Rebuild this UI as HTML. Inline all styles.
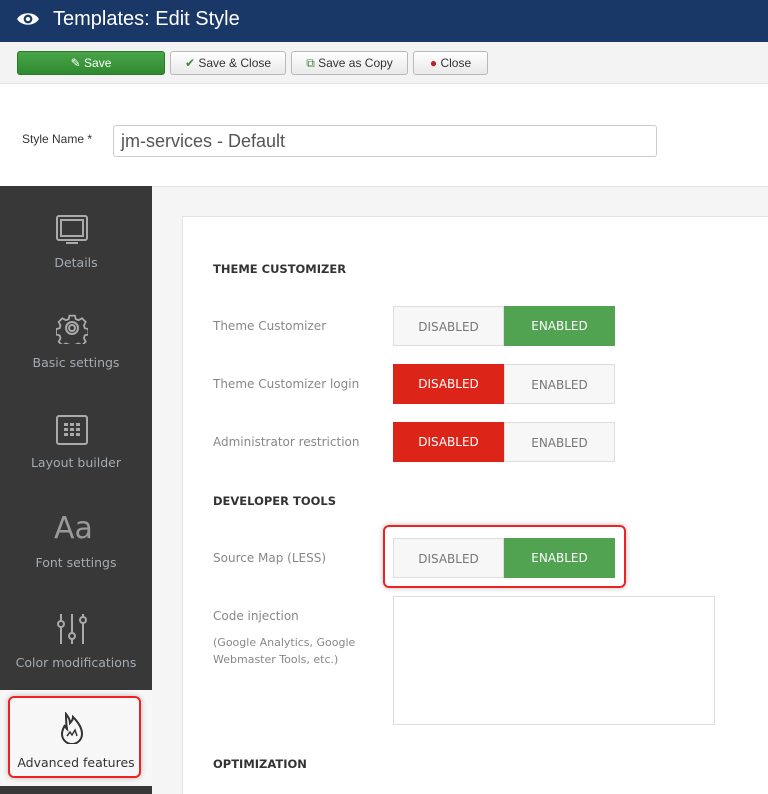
<!DOCTYPE html>
<html style="width:768px;height:794px;overflow:hidden"><head><meta charset="utf-8"><style>
*{box-sizing:border-box;margin:0;padding:0}
body{width:768px;height:794px;overflow:hidden;font-family:"Liberation Sans",sans-serif;background:#fff;position:relative}
.hdr{position:absolute;left:0;top:0;width:768px;height:42px;background:#1a3867;color:#fff}
.hdr span{position:absolute;left:53px;top:8px;font-size:20px}
.tb{position:absolute;top:42px;left:0;width:768px;height:42px;background:#f3f3f3;border-bottom:1px solid #e2e2e2}
.btn{position:absolute;top:9px;height:24px;border:1px solid #b9b9b9;border-radius:3px;background:linear-gradient(#fff,#e9e9e9);font-size:12px;color:#333;line-height:22px;text-align:center}
.sn{position:absolute;left:22px;top:132px;font-size:12px;color:#333}
.inp{position:absolute;left:113px;top:125px;width:544px;height:32px;border:1px solid #ccc;border-radius:3px;font-size:18px;color:#555;padding:5px 7px}
.main{position:absolute;left:0;top:186px;width:768px;height:608px;background:#f5f5f5;border-top:1px solid #e2e2e2}
.side{position:absolute;left:0;top:186px;width:152px;height:608px;background:#383838}
.it{position:absolute;left:0;width:152px;text-align:center;font-family:"DejaVu Sans",sans-serif;font-size:12.5px;color:#a3abb3}
.panel{position:absolute;left:182px;top:216px;width:586px;height:578px;background:#fff;border:1px solid #e3e3e3;border-right:none;border-bottom:none}
.h{position:absolute;left:213px;font-family:"DejaVu Sans",sans-serif;font-weight:bold;font-size:11.5px;color:#333}
.lb{position:absolute;left:213px;font-family:"DejaVu Sans",sans-serif;font-size:12px;color:#888}
.tg{position:absolute;left:393px;width:222px;height:40px;font-family:"DejaVu Sans",sans-serif;font-size:12px}
.tg div{position:absolute;top:0;width:111px;height:40px;line-height:40px;text-align:center}
.off{background:#f7f7f7;border:1px solid #ddd;color:#777}
.on{background:#51a351;color:#fff}
.red{background:#dd2418;color:#fff}
</style></head><body>
<div class="hdr"><svg style="position:absolute;left:16px;top:10px" width="24" height="18" viewBox="0 0 22 16"><path d="M1 8C5 1 17 1 21 8C17 15 5 15 1 8Z" fill="#fff"/><circle cx="11" cy="8" r="4" fill="#1a3867"/><circle cx="11" cy="8" r="2" fill="#fff"/></svg><span>Templates: Edit Style</span></div>
<div class="tb">
<div class="btn" style="left:17px;width:148px;background:linear-gradient(#4aa54a,#2f8a2f);border-color:#2a7a2a;color:#fff">✎ Save</div>
<div class="btn" style="left:170px;width:116px"><span style="color:#3a8a3a">✔</span> Save &amp; Close</div>
<div class="btn" style="left:291px;width:117px"><span style="color:#3a8a3a">⧉</span> Save as Copy</div>
<div class="btn" style="left:413px;width:75px"><span style="color:#b22">●</span> Close</div>
</div>
<div class="sn">Style Name *</div>
<div class="inp">jm-services - Default</div>
<div class="main"></div>
<div class="side"></div>
<svg style="position:absolute;left:56px;top:215px" width="32" height="30" viewBox="0 0 32 30" fill="none" stroke="#aaa" stroke-width="2"><rect x="1" y="1" width="30" height="24" rx="2"/><rect x="5" y="5" width="22" height="16"/><path d="M10 28h12"/></svg>
<div class="it" style="top:255px">Details</div>
<svg style="position:absolute;left:56px;top:312px" width="32" height="32" viewBox="0 0 32 32" fill="none" stroke="#aaa" stroke-width="2"><path d="M13 2h6l1 4 3 1 4-2 4 4-2 4 1 3 4 1v6l-4 1-1 3 2 4-4 4-4-2-3 1-1 4h-6l-1-4-3-1-4 2-4-4 2-4-1-3-4-1v-6l4-1 1-3-2-4 4-4 4 2 3-1z" transform="scale(.9) translate(2 2)"/><circle cx="16" cy="16" r="6"/><circle cx="16" cy="16" r="3"/></svg>
<div class="it" style="top:355px">Basic settings</div>
<svg style="position:absolute;left:56px;top:415px" width="32" height="30" viewBox="0 0 32 30"><rect x="1" y="1" width="30" height="28" rx="2" fill="none" stroke="#aaa" stroke-width="2"/><g fill="#aaa"><rect x="8" y="8" width="4" height="3"/><rect x="14" y="8" width="4" height="3"/><rect x="20" y="8" width="4" height="3"/><rect x="8" y="13" width="4" height="3"/><rect x="14" y="13" width="4" height="3"/><rect x="20" y="13" width="4" height="3"/><rect x="8" y="18" width="4" height="3"/><rect x="14" y="18" width="4" height="3"/><rect x="20" y="18" width="4" height="3"/></g></svg>
<div class="it" style="top:455px">Layout builder</div>
<div style="position:absolute;left:54px;top:511px;font-family:'DejaVu Sans',sans-serif;font-size:30px;color:#999">Aa</div>
<div class="it" style="top:555px">Font settings</div>
<svg style="position:absolute;left:56px;top:612px" width="32" height="34" viewBox="0 0 32 34" fill="none" stroke="#aaa" stroke-width="2"><path d="M5 2v30M16 2v30M27 2v30"/><circle cx="5" cy="12" r="3" fill="#383838"/><circle cx="16" cy="24" r="3" fill="#383838"/><circle cx="27" cy="8" r="3" fill="#383838"/></svg>
<div class="it" style="top:655px">Color modifications</div>
<div style="position:absolute;left:0;top:690px;width:152px;height:96px;background:#f7f7f7"></div>
<div style="position:absolute;left:8px;top:696px;width:133px;height:82px;border:2px solid #e22;border-radius:6px;box-shadow:0 0 6px rgba(0,0,0,.25)"></div>
<svg style="position:absolute;left:60px;top:712px" width="24" height="32" viewBox="0 0 24 32" fill="none" stroke="#333" stroke-width="2"><path d="M6 2c3 4 4 6 4 9 2-2 3-4 3-6 4 4 9 10 9 17a9 9 0 0 1-20 0c0-4 2-7 3-9 0 2 1 3 2 4-1-6-1-10-1-15z"/><path d="M7 24l3-4 2 3 3-5 2 6" stroke-width="1.5"/></svg>
<div class="it" style="top:755px;color:#333">Advanced features</div>
<div class="panel"></div>
<div class="h" style="top:262px">THEME CUSTOMIZER</div>
<div class="lb" style="top:319px">Theme Customizer</div>
<div class="tg" style="top:306px"><div class="off" style="left:0">DISABLED</div><div class="on" style="left:111px">ENABLED</div></div>
<div class="lb" style="top:377px">Theme Customizer login</div>
<div class="tg" style="top:364px"><div class="red" style="left:0">DISABLED</div><div class="off" style="left:111px">ENABLED</div></div>
<div class="lb" style="top:435px">Administrator restriction</div>
<div class="tg" style="top:422px"><div class="red" style="left:0">DISABLED</div><div class="off" style="left:111px">ENABLED</div></div>
<div class="h" style="top:494px">DEVELOPER TOOLS</div>
<div class="lb" style="top:551px">Source Map (LESS)</div>
<div style="position:absolute;left:383px;top:525px;width:243px;height:63px;border:2px solid #e22;border-radius:6px;box-shadow:0 0 6px rgba(0,0,0,.25)"></div>
<div class="tg" style="top:538px"><div class="off" style="left:0">DISABLED</div><div class="on" style="left:111px">ENABLED</div></div>
<div class="lb" style="top:609px">Code injection</div>
<div class="lb" style="top:634px;font-size:11px;line-height:17px">(Google Analytics, Google<br>Webmaster Tools, etc.)</div>
<div style="position:absolute;left:393px;top:596px;width:322px;height:129px;border:1px solid #ddd"></div>
<div class="h" style="top:757px">OPTIMIZATION</div>
</body></html>
